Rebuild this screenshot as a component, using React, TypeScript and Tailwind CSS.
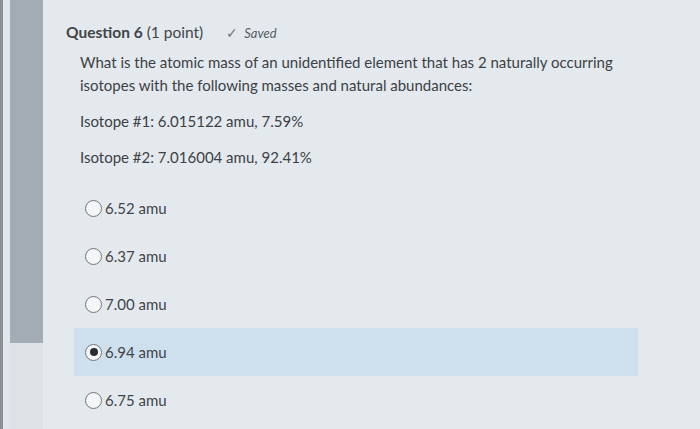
import React from "react";

const options = [
  { label: "6.52 amu", selected: false },
  { label: "6.37 amu", selected: false },
  { label: "7.00 amu", selected: false },
  { label: "6.94 amu", selected: true },
  { label: "6.75 amu", selected: false },
];

function Radio({ selected }: { selected: boolean }) {
  return (
    <span className="w-[17px] h-[17px] rounded-full border-[1.5px] border-[#6f757b] bg-[#f4f6f8] flex items-center justify-center shrink-0">
      {selected && <span className="w-[8px] h-[8px] rounded-full bg-[#2a2d31]" />}
    </span>
  );
}

export default function App() {
  return (
    <div className="w-[700px] h-[429px] overflow-hidden bg-[#e4e9ed] flex text-[#3c4146]" style={{ fontFamily: "Lato, 'Noto Sans', sans-serif" }}>
      <div className="w-[3px] bg-[#8b9096] shrink-0" />
      <div className="w-[7px] shrink-0 bg-[#e1e6ea]" />
      <div className="w-[33px] shrink-0 flex flex-col">
        <div className="h-[343px] bg-[#a3abb4]" />
        <div className="flex-1 bg-[#dde2e6]" />
      </div>
      <div className="flex-1 flex flex-col pl-[23px] pt-[21px]">
        <div className="flex items-baseline h-[22px]">
          <span className="text-[15.5px] font-bold text-[#40454a]">Question 6</span>
          <span className="text-[15.5px] ml-[4px] text-[#40454a]">(1 point)</span>
          <span className="ml-[23px] text-[#6f777e] text-[14px]">✓</span>
          <span className="ml-[6px] italic text-[13px] text-[#565d63]">Saved</span>
        </div>
        <div className="pl-[14px] mt-[8px] text-[15px] leading-[23px]">
          <p>What is the atomic mass of an unidentified element that has 2 naturally occurring</p>
          <p>isotopes with the following masses and natural abundances:</p>
          <p className="mt-[13px]">Isotope #1: 6.015122 amu, 7.59%</p>
          <p className="mt-[13px]">Isotope #2: 7.016004 amu, 92.41%</p>
        </div>
        <div className="mt-[15px] flex flex-col ml-[8px] mr-[62px]">
          {options.map((o) => (
            <div
              key={o.label}
              className={`flex items-center h-[48px] pl-[11px] gap-[3px] ${o.selected ? "bg-[#cedfed]" : ""}`}
            >
              <Radio selected={o.selected} />
              <span className="text-[15px] text-[#40454a]">{o.label}</span>
            </div>
          ))}
        </div>
      </div>
    </div>
  );
}
